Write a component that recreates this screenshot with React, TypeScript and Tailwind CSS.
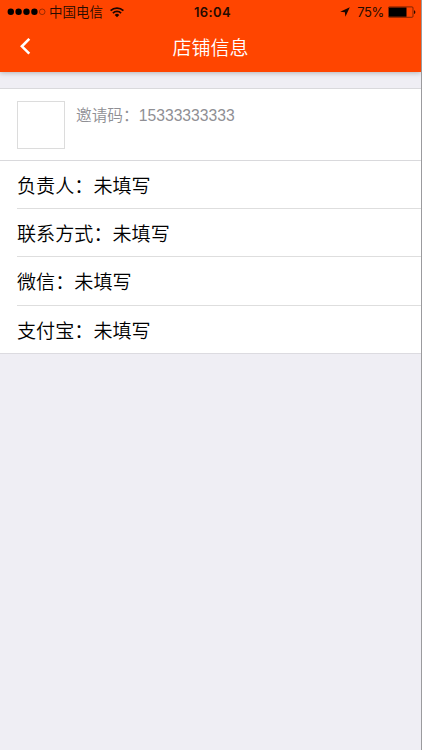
const details = [
  { label: '负责人', value: '未填写' },
  { label: '联系方式', value: '未填写' },
  { label: '微信', value: '未填写' },
  { label: '支付宝', value: '未填写' },
]

function StatusBar() {
  return (
    <div className="grid h-6 grid-cols-3 items-center pl-[7px] pr-[5px] text-[#260b00]">
      <div className="flex h-6 items-center">
        <svg width="39" height="8" viewBox="0 0 39 8" fill="#000">
          <circle cx="3.8" cy="3.8" r="3.2" />
          <circle cx="11.6" cy="3.8" r="3.2" />
          <circle cx="19.5" cy="3.8" r="3.2" />
          <circle cx="27.4" cy="3.8" r="3.2" />
          <circle cx="35.2" cy="3.8" r="2.8" fill="none" stroke="#5c1a00" strokeWidth="0.6" />
        </svg>
        <span className="ml-[3px] whitespace-nowrap pt-px text-[13.5px] font-[350] leading-6">中国电信</span>
        <svg className="ml-[7px] shrink-0" width="14" height="11" viewBox="0 0 14 11" fill="none" stroke="#1a0600" strokeWidth="1.7">
          <path d="M0.6 3.7a9 9 0 0 1 12.8 0" />
          <path d="M2.9 6.1a5.8 5.8 0 0 1 8.2 0" />
          <path d="M7 10.2 4.7 7.9a3.3 3.3 0 0 1 4.6 0z" fill="#1a0600" stroke="none" />
        </svg>
      </div>
      <span className="pl-[2px] text-center font-['Inter','Noto_Sans_CJK_SC',sans-serif] text-[13px] font-semibold leading-6 tracking-[0.4px]">16:04</span>
      <div className="flex h-6 items-center justify-end">
        <svg width="10" height="10" viewBox="0 0 10 10" fill="#1a0600">
          <path d="M9.8 0.2 5.4 9.7 4.9 5.2 0.2 4.7z" />
        </svg>
        <span className="ml-[7px] font-['Inter','Noto_Sans_CJK_SC',sans-serif] text-[13px] leading-6 tracking-[-0.4px]">75%</span>
        <svg className="ml-[4px]" width="28" height="12" viewBox="0 0 28 12">
          <rect x="0.4" y="0.9" width="24.6" height="10.4" rx="1" fill="none" stroke="#4d1500" strokeWidth="0.7" />
          <rect x="1" y="1.5" width="17.5" height="9.2" fill="#000" />
          <path d="M26 4.2c1.8.4 1.8 3.4 0 3.8z" fill="#260b00" />
        </svg>
      </div>
    </div>
  )
}

export default function App() {
  return (
    <div className="h-[750px] w-full overflow-hidden border-r border-[#9b9b9e] bg-[#efeef4] font-['Liberation_Sans','Noto_Sans_CJK_SC',sans-serif] text-black">
      <header className="relative h-[72px] bg-[#ff4500] shadow-[0_1px_5px_rgba(0,0,0,0.25)]">
        <StatusBar />
        <div className="grid h-12 grid-cols-[60px_1fr_60px] items-center">
          <button aria-label="返回" className="pb-[3px] pl-5">
            <svg width="11" height="17" viewBox="0 0 11 17" fill="none" stroke="#fff" strokeWidth="2.6">
              <path d="M9.3 0.9 1.9 8.3l7.4 7.4" />
            </svg>
          </button>
          <h1 className="h-12 pt-px text-center text-[19px] font-[350] leading-12 text-white">店铺信息</h1>
        </div>
      </header>

      <main className="mt-4">
        {/* Shop summary */}
        <section className="flex h-[73px] border-y border-[#d9d9dc] bg-white pl-[17px] pt-3">
          <div className="h-12 w-12 border border-[#dcdcdc]" />
          <p className="ml-[11px] mt-[3px] text-[15.7px] font-[350] leading-6 text-[#8f8f94]">邀请码：15333333333</p>
        </section>

        {/* Contact details */}
        <ul className="border-b border-[#dcdbe0] bg-white pl-[17px]">
          {details.map((item) => (
            <li
              key={item.label}
              className="h-[48.2px] border-b border-[#dedede] pt-[2px] text-[19.1px] font-[350] leading-[48px] last:h-[47.4px] last:border-b-0"
            >
              {item.label}：{item.value}
            </li>
          ))}
        </ul>
      </main>
    </div>
  )
}
